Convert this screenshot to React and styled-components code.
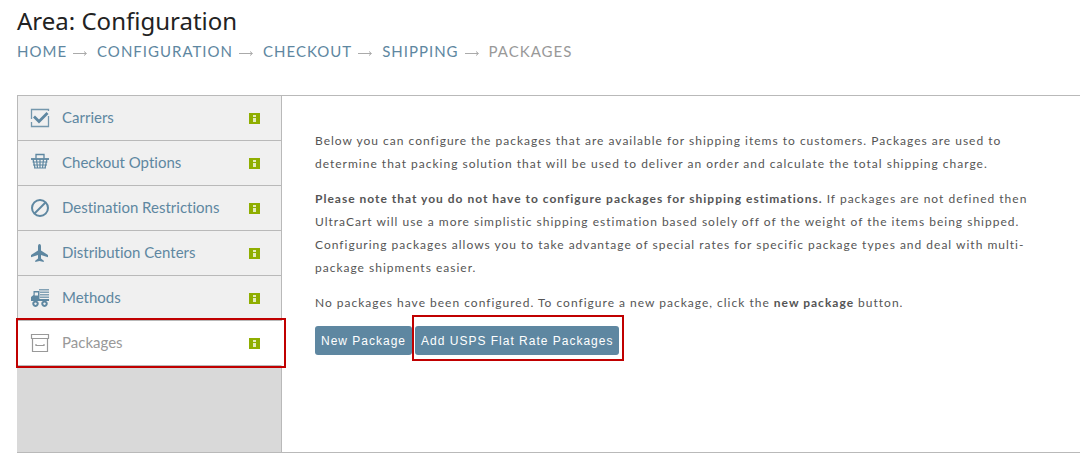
import React from "react";
import styled, { createGlobalStyle } from "styled-components";

const GlobalStyle = createGlobalStyle`
  *, *::before, *::after { box-sizing: border-box; }
  body {
    margin: 0;
    background: #fff;
    color: #555;
    font-family: Lato, "Liberation Sans", sans-serif;
    font-variant-ligatures: none;
  }
`;

const Page = styled.div`
  padding: 5px 0 14px 17px;
`;

const Title = styled.h1`
  margin: 0;
  color: #222;
  font-family: "Noto Sans", "Open Sans", sans-serif;
  font-size: 24px;
  font-weight: 400;
  line-height: 32px;
`;

const Crumbs = styled.nav`
  margin: 4px 0 33px;
  color: #999;
  font-size: 15px;
  line-height: 21px;
  letter-spacing: 1px;
  text-transform: uppercase;
  display: flex;
  align-items: center;
`;

const CrumbLink = styled.a`
  color: #5e87a1;
  text-decoration: none;
`;

const CrumbArrow = styled.svg`
  width: 14px;
  height: 5px;
  margin: 3px 10px 0 6px;
`;

const Panel = styled.div`
  display: grid;
  grid-template-columns: 265px minmax(0, 1fr);
  min-height: 358px;
  border: solid #b9b9b9;
  border-width: 1px 0;
`;

const Sidebar = styled.nav`
  display: flex;
  flex-direction: column;
  background: #d9d9d9;
`;

const SidebarFill = styled.div`
  flex: 1;
  border-right: 1px solid #b9b9b9;
`;

const MenuItem = styled.a`
  position: relative;
  display: flex;
  align-items: center;
  height: 45px;
  padding: 0 21px 0 12px;
  border: solid #b9b9b9;
  border-width: 0 1px 1px;
  border-right-color: ${(p) => (p.$active ? "#fff" : "#b9b9b9")};
  background: ${(p) => (p.$active ? "#fff" : "#f0f0f0")};
  color: ${(p) => (p.$active ? "#999" : "#5e87a1")};
  font-size: 15px;
  line-height: 20px;
  text-decoration: none;

  &::after {
    content: ${(p) => (p.$active ? '""' : "none")};
    position: absolute;
    inset: -3px -5px -3px -2px;
    border: 2px solid #c00000;
  }
`;

const MenuIcon = styled.svg`
  width: 20px;
  height: 20px;
  margin-right: 12px;
  flex: none;
`;

const MenuLabel = styled.span`
  flex: 1;
  padding-bottom: 2px;
`;

const InfoIcon = styled.svg`
  width: 11px;
  height: 11px;
  flex: none;
`;

const Content = styled.main`
  padding: 33px 30px 0 33px;
  font-size: 12px;
  line-height: 23px;
  letter-spacing: 1px;
`;

const Paragraph = styled.p`
  margin: 0 0 12px;
`;

const Actions = styled.div`
  display: flex;
  gap: 3px;
`;

const Button = styled.button`
  height: 29px;
  padding: 2px 6px 0;
  border: 0;
  border-radius: 3px;
  background: #5e87a1;
  color: #fff;
  font: 400 12px/27px "Liberation Sans", Arial, sans-serif;
  letter-spacing: 1px;
  white-space: nowrap;
`;

const Highlight = styled.span`
  position: relative;
  display: flex;

  &::after {
    content: "";
    position: absolute;
    inset: -11px -5px -6px -3px;
    border: 2px solid #c00000;
    pointer-events: none;
  }
`;

const icons = {
  carriers: (
    <g fill="none" stroke="currentColor">
      <path d="M1.5 11V1.5H18.5V3M1.5 14V18.5H18.5V8" strokeWidth="1.3" opacity="0.85" />
      <path d="M4 8.5L9 13.5L17.5 5" strokeWidth="2.8" />
    </g>
  ),
  checkout: (
    <g fill="none" stroke="currentColor">
      <path d="M6 5.5V1.5H14V5.5" strokeWidth="1.3" />
      <path d="M1 6H19" strokeWidth="1.8" />
      <path d="M2.5 9H17.5M3 12H17M4 15H16M3 6L5 15M6.5 6L7.5 15M10 6V15M13.5 6L12.5 15M17 6L15 15" strokeWidth="1.2" />
    </g>
  ),
  destination: (
    <g fill="none" stroke="currentColor" strokeWidth="2">
      <circle cx="10" cy="10" r="8" />
      <path d="M4.5 15.5L15.5 4.5" />
    </g>
  ),
  distribution: (
    <path
      fill="currentColor"
      d="M9.5 1C10.5 1 11 2.2 11 3.5V7.5L18 12V14.2L11 12V15.5L13.8 17.8V19L9.5 18L5.2 19V17.8L8 15.5V12L1 14.2V12L8 7.5V3.5C8 2.2 8.5 1 9.5 1Z"
    />
  ),
  methods: (
    <g fill="currentColor">
      <path d="M9 1H19V2.500H9ZM10 3.500H19V5H10ZM10 6H19V7.500H10ZM10 8.500H19V10H10Z" opacity="0.75" />
      <path fillRule="evenodd" d="M3.500 3H9.500V11H19V13H1V9L3.500 7ZM4.700 4.500V7.500H8V4.500Z" />
      <path
        fillRule="evenodd"
        d="M5.500 12.500a3.200 3.200 0 1 0 .01 0ZM5.500 14.500a1.200 1.200 0 1 1-.01 0ZM14.500 12.500a3.200 3.200 0 1 0 .01 0ZM14.500 14.500a1.200 1.200 0 1 1-.01 0Z"
      />
    </g>
  ),
  packages: (
    <g fill="none" stroke="currentColor" strokeWidth="1.2">
      <path d="M1.500 1.500H18.500V5.500H1.500ZM2.500 5.500V18.500H17.500V5.500" />
      <path d="M6 11V12.500H14V11" />
    </g>
  ),
};

const menu = [
  ["carriers", "Carriers"],
  ["checkout", "Checkout Options"],
  ["destination", "Destination Restrictions"],
  ["distribution", "Distribution Centers"],
  ["methods", "Methods"],
  ["packages", "Packages"],
];

const crumbs = ["Home", "Configuration", "Checkout", "Shipping"];

export default function App() {
  return (
    <Page>
      <GlobalStyle />
      <Title>Area: Configuration</Title>
      <Crumbs aria-label="Breadcrumb">
        {crumbs.map((name) => (
          <React.Fragment key={name}>
            <CrumbLink href="#">{name}</CrumbLink>
            <CrumbArrow viewBox="0 0 14 5" aria-hidden="true">
              <path d="M0 2.500H13M11 0.500L13.500 2.500L11 4.500" fill="none" stroke="#aaa" />
            </CrumbArrow>
          </React.Fragment>
        ))}
        <span aria-current="page">Packages</span>
      </Crumbs>
      <Panel>
        <Sidebar aria-label="Checkout settings">
          {menu.map(([icon, label]) => (
            <MenuItem key={icon} href="#" $active={icon === "packages"}>
              <MenuIcon viewBox="0 0 20 20" aria-hidden="true">
                {icons[icon]}
              </MenuIcon>
              <MenuLabel>{label}</MenuLabel>
              <InfoIcon viewBox="0 0 11 11" aria-hidden="true">
                <rect width="11" height="11" fill="#8fae00" />
                <path d="M4 2H7V4H4ZM4 5H7V9H4Z" fill="#fff" opacity="0.75" />
              </InfoIcon>
            </MenuItem>
          ))}
          <SidebarFill />
        </Sidebar>
        <Content>
          <Paragraph>
            Below you can configure the packages that are available for shipping items to customers.
            Packages are used to determine that packing solution that will be used to deliver an
            order and calculate the total shipping charge.
          </Paragraph>
          <Paragraph>
            <strong>
              Please note that you do not have to configure packages for shipping estimations.
            </strong>{" "}
            If packages are not defined then UltraCart will use a more simplistic shipping
            estimation based solely off of the weight of the items being shipped. Configuring
            packages allows you to take advantage of special rates for specific package types and
            deal with multi-package shipments easier.
          </Paragraph>
          <Paragraph>
            No packages have been configured. To configure a new package, click the{" "}
            <strong>new package</strong> button.
          </Paragraph>
          <Actions>
            <Button type="button">New Package</Button>
            <Highlight>
              <Button type="button">Add USPS Flat Rate Packages</Button>
            </Highlight>
          </Actions>
        </Content>
      </Panel>
    </Page>
  );
}
